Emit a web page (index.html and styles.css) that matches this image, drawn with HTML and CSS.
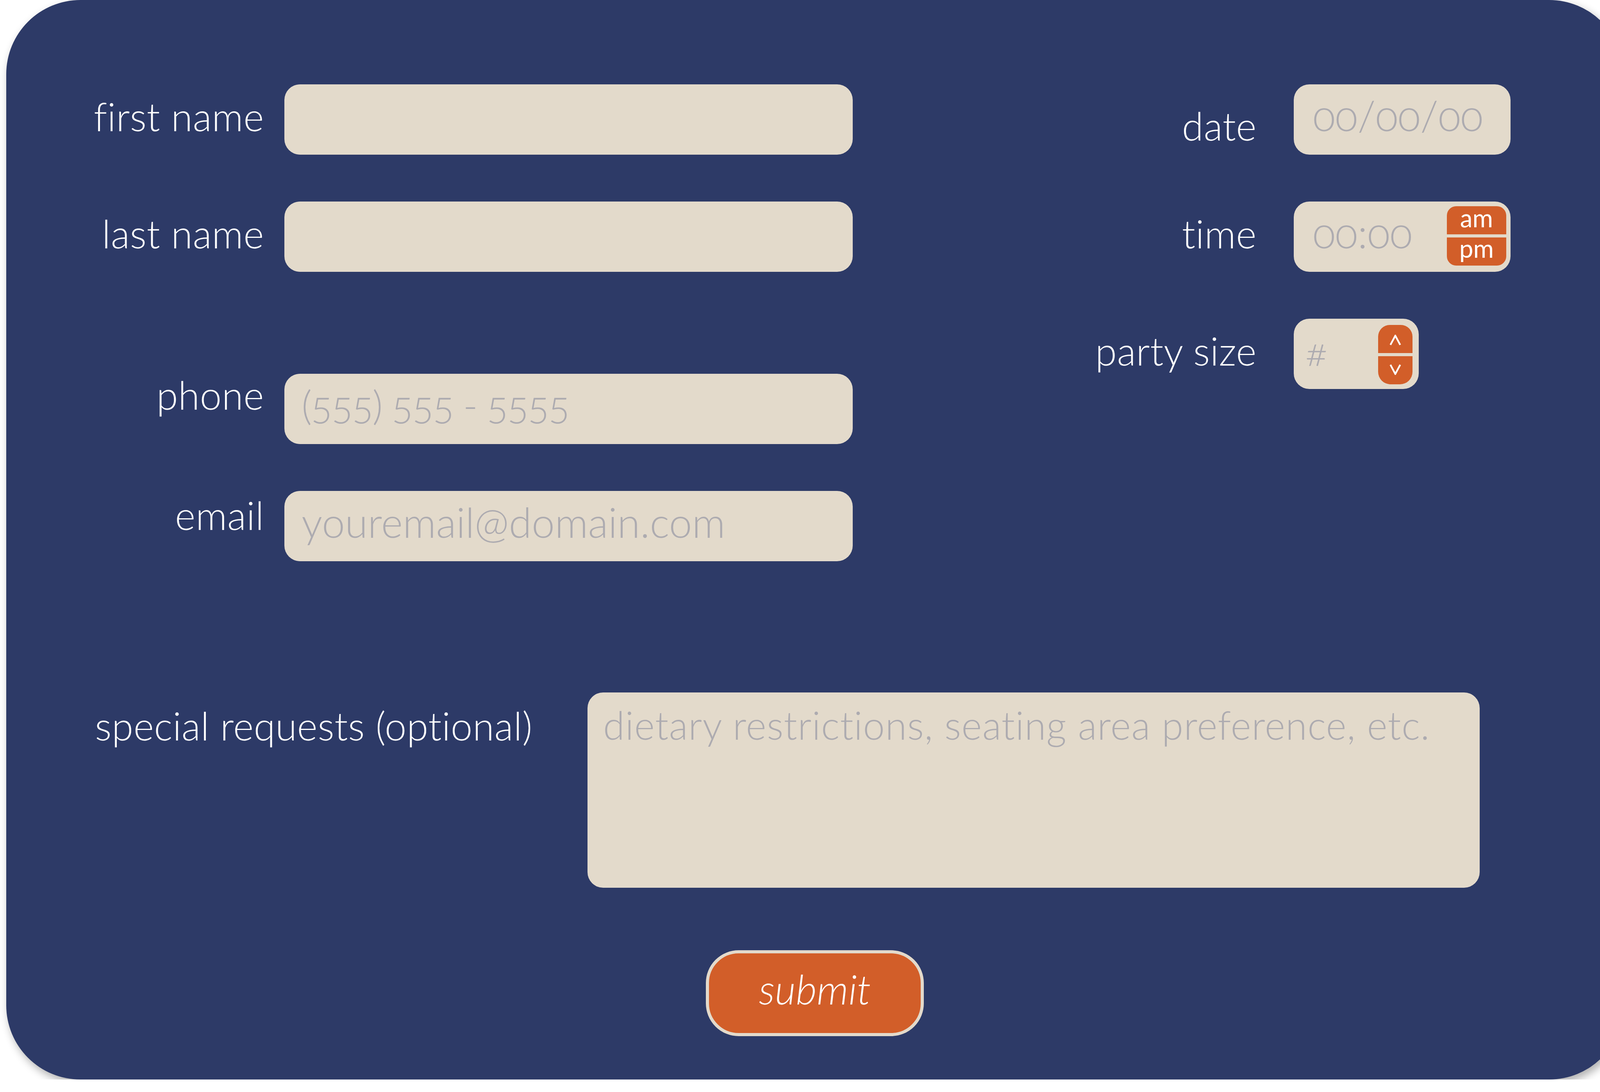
FILE: index.html
```html
<!DOCTYPE html>
<html lang="en">
<head>
<meta charset="utf-8">
<title>Reservation form</title>
<link rel="stylesheet" href="styles.css">
</head>
<body>
<main class="card">
  <div class="top">
    <div class="contact">
      <div class="row">
        <label class="lbl lbl-first">first name</label>
        <div class="field"></div>
      </div>
      <div class="row">
        <label class="lbl">last name</label>
        <div class="field"></div>
      </div>
      <div class="row row-spaced">
        <label class="lbl lbl-phone">phone</label>
        <div class="field"><span class="ph ph-phone">(555) 555 - 5555</span></div>
      </div>
      <div class="row">
        <label class="lbl lbl-email">email</label>
        <div class="field"><span class="ph">youremail@domain.com</span></div>
      </div>
    </div>
    <div class="booking">
      <label class="lbl lbl-date">date</label>
      <div class="field field-date"><span class="ph">00/00/00</span></div>

      <label class="lbl">time</label>
      <div class="field field-date">
        <span class="ph">00:00</span>
        <div class="toggle">
          <span class="toggle-am">am</span>
          <span class="toggle-pm">pm</span>
        </div>
      </div>

      <label class="lbl">party size</label>
      <div class="field field-party">
        <span class="ph ph-hash">#</span>
        <div class="spin">
          <span class="spin-up"><svg width="30" height="28" viewBox="0 0 30 28"><polyline points="2.5,26 15,2.5 27.5,26" fill="none" stroke="#ffffff" stroke-width="4.5"/></svg></span>
          <span class="spin-down"><svg width="30" height="28" viewBox="0 0 30 28"><polyline points="2.5,2 15,25.5 27.5,2" fill="none" stroke="#ffffff" stroke-width="4.5"/></svg></span>
        </div>
      </div>
    </div>
  </div>

  <div class="requests">
    <label class="lbl lbl-req">special requests (optional)</label>
    <div class="field field-area"><span class="ph ph-area">dietary restrictions, seating area preference, etc.</span></div>
  </div>

  <div class="actions">
    <button class="submit" type="button">submit</button>
  </div>
</main>
</body>
</html>
```

FILE: styles.css
```css
html, body {
  margin: 0;
  padding: 0;
  background: #ffffff;
}

body {
  font-family: "Lato", "Open Sans", sans-serif;
  font-variant-ligatures: no-common-ligatures;
}

.card {
  box-sizing: border-box;
  width: 4140px;
  margin-left: 16px;
  padding: 216px 0 111px 0;
  background: #2d3a67;
  border-radius: 190px;
  box-shadow: 6px 10px 22px rgba(0, 0, 0, 0.32);
}

.top {
  display: flex;
  justify-content: space-between;
  padding-right: 289px;
}

.contact {
  display: flex;
  flex-direction: column;
  gap: 120px;
}

.row {
  display: flex;
  gap: 52px;
  height: 180px;
}

.row-spaced {
  margin-top: 141px;
}

.lbl {
  display: block;
  box-sizing: border-box;
  color: #ffffff;
  font-size: 100px;
  font-weight: 300;
  line-height: 1;
  padding-top: 31px;
  white-space: nowrap;
  letter-spacing: 0.5px;
}

.lbl-first {
  font-variant-ligatures: common-ligatures;
}

.contact .lbl {
  width: 660px;
  text-align: right;
}

.lbl-phone { padding-top: 3px; }
.lbl-email { padding-top: 11px; }
.lbl-date { padding-top: 55px; }

.field {
  box-sizing: border-box;
  display: flex;
  align-items: flex-start;
  width: 1455px;
  height: 180px;
  padding-left: 44px;
  background: #e3dacb;
  border-radius: 40px;
}

.ph {
  display: block;
  color: #adabb0;
  font-size: 106px;
  font-weight: 300;
  line-height: 1;
  padding-top: 26px;
  white-space: nowrap;
  font-variant-numeric: oldstyle-nums;
}

.ph-phone {
  font-size: 102px;
  letter-spacing: -2.5px;
  padding-top: 28px;
}

.booking {
  display: grid;
  grid-template-columns: auto 555px;
  grid-auto-rows: 180px;
  column-gap: 95px;
  row-gap: 120px;
}

.booking .lbl {
  text-align: right;
}

.field-date {
  width: 555px;
  padding-left: 49px;
}

.toggle {
  display: flex;
  flex-direction: column;
  gap: 8px;
  width: 152px;
  margin: 12px 11px 0 auto;
}

.toggle-am,
.toggle-pm {
  display: block;
  height: 72px;
  background: #d25e29;
  color: #ffffff;
  font-size: 64px;
  font-weight: 400;
  text-align: center;
}

.toggle-am {
  line-height: 60px;
  border-radius: 24px 24px 0 0;
}

.toggle-pm {
  line-height: 56px;
  border-radius: 0 0 24px 24px;
}

.field-party {
  width: 320px;
  padding-left: 31px;
  justify-self: start;
}

.ph-hash {
  font-size: 100px;
  padding-top: 32px;
}

.spin {
  display: flex;
  flex-direction: column;
  gap: 8px;
  width: 88px;
  margin: 16px 16px 0 auto;
}

.spin-up,
.spin-down {
  display: flex;
  justify-content: center;
  height: 72px;
  background: #d25e29;
}

.spin-up {
  align-items: flex-start;
  border-radius: 30px 30px 0 0;
}

.spin-up svg {
  margin-top: 25px;
}

.spin-down {
  border-radius: 0 0 32px 32px;
}

.spin-down svg {
  margin-top: 20px;
}

.requests {
  display: flex;
  margin-top: 336px;
  padding-left: 227px;
}

.lbl-req {
  width: 1261px;
  padding-top: 34px;
}

.field-area {
  width: 2284px;
  height: 500px;
  padding-left: 40px;
}

.ph-area {
  font-size: 100px;
  padding-top: 32px;
  letter-spacing: 1.2px;
}

.actions {
  display: flex;
  justify-content: center;
  margin-top: 160px;
}

.submit {
  box-sizing: border-box;
  width: 558px;
  height: 220px;
  padding: 0 0 22px 0;
  background: #d25e29;
  border: 8px solid #e3dacb;
  border-radius: 84px;
  color: #ffffff;
  font-family: "Lato", "Open Sans", sans-serif;
  font-size: 104px;
  font-style: italic;
  font-weight: 300;
  line-height: 1;
}
```
